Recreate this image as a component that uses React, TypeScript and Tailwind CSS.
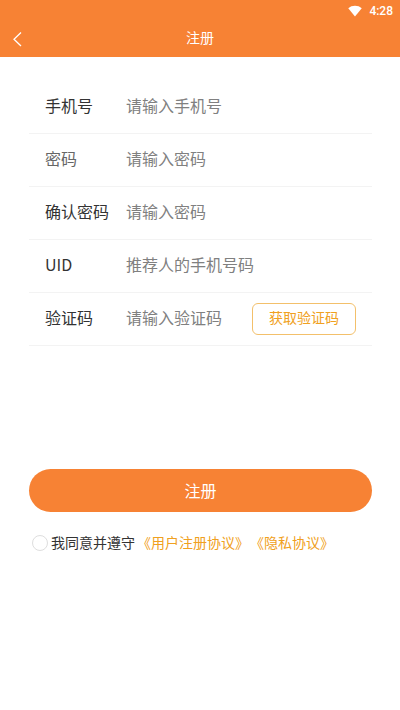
import { useState } from "react"

const fields = [
  { id: "phone", label: "手机号", placeholder: "请输入手机号", type: "tel" },
  { id: "password", label: "密码", placeholder: "请输入密码", type: "password", muted: true },
  { id: "confirm", label: "确认密码", placeholder: "请输入密码", type: "password" },
  { id: "uid", label: "UID", placeholder: "推荐人的手机号码", type: "text" },
  { id: "code", label: "验证码", placeholder: "请输入验证码", type: "text", action: "获取验证码" },
]

function Header() {
  return (
    <header className="bg-[#f78234] text-white">
      <div className="flex h-5 items-center justify-end gap-1.5 pr-[7px] pt-0.5">
        <svg viewBox="0 0 16 13" className="h-3 w-4" fill="currentColor" aria-hidden="true">
          <path d="M8 12.5 0.7 3.4C2.7 1.6 5.2.7 8 .7s5.3.9 7.3 2.7z" />
        </svg>
        <span className="font-[Roboto,sans-serif] text-[12px] font-medium leading-4">4:28</span>
      </div>
      <div className="grid h-[37px] grid-cols-[48px_1fr_48px] items-center">
        <button type="button" aria-label="返回" className="flex h-full items-center pl-3">
          <svg viewBox="0 0 10 16" className="h-4 w-2.5" fill="none" stroke="currentColor" strokeWidth="1.3" aria-hidden="true">
            <path d="M9 1.5 2 8.2 9 15" />
          </svg>
        </button>
        <h1 className="pb-1 text-center text-[14px] leading-5">注册</h1>
      </div>
    </header>
  )
}

export default function App() {
  const [agreed, setAgreed] = useState(false)

  return (
    <div className="min-h-screen bg-white font-['Noto_Sans_CJK_SC',sans-serif] text-[#333]">
      <Header />
      <form className="px-7 pt-6 pl-[29px]" onSubmit={(e) => e.preventDefault()}>
        {fields.map((field) => (
          <div key={field.id} className="flex h-[53px] items-center border-b border-[#f3f3f3] px-4">
            <label
              htmlFor={field.id}
              className={`w-[81px] shrink-0 pb-1 text-[16px] leading-6 ${field.muted ? "text-[#666]" : "text-[#333]"}`}
            >
              {field.label}
            </label>
            <input
              id={field.id}
              type={field.type}
              placeholder={field.placeholder}
              className="h-10 min-w-0 flex-1 bg-transparent pb-1 text-[16px] outline-none placeholder:text-[#808080]"
            />
            {field.action && (
              <button
                type="button"
                className="h-8 w-[104px] shrink-0 rounded-md border border-[#f3c06b] pb-1 text-[14px] leading-5 text-[#f0a020]"
              >
                {field.action}
              </button>
            )}
          </div>
        ))}

        <button
          type="submit"
          className="mt-[123px] block h-[43px] w-full rounded-full bg-[#f78234] pb-0.5 text-[16px] leading-6 text-white"
        >
          注册
        </button>

        <div className="mt-5 flex items-center pl-[3px] text-[14px] leading-5">
          <input
            id="agree"
            type="checkbox"
            checked={agreed}
            onChange={(e) => setAgreed(e.target.checked)}
            className="mr-[3px] size-4 shrink-0 appearance-none rounded-full border border-[#dedede] checked:border-[#f78234] checked:bg-[#f78234]"
          />
          <label htmlFor="agree" className="whitespace-nowrap pb-0.5">我同意并遵守</label>
          <a href="#terms" className="ml-0.5 whitespace-nowrap pb-0.5 text-[#f0a020]">《用户注册协议》</a>
          <a href="#privacy" className="ml-px whitespace-nowrap pb-0.5 text-[#f0a020]">《隐私协议》</a>
        </div>
      </form>
    </div>
  )
}
